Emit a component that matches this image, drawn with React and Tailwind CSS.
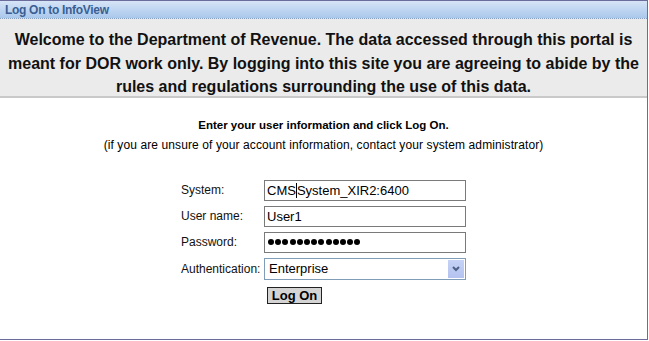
export default function App() {
  const labelCls = "text-[12px] text-[#111] leading-none";
  const inputCls =
    "w-[202px] h-[21px] border border-[#7a7a7a] bg-white px-[2px] text-[13px] text-black flex items-center leading-none";
  return (
    <div className="w-[649px] h-[341px] bg-white" style={{ fontFamily: '"Liberation Sans", Arial, sans-serif' }}>
      <div className="w-[648px] h-[340px] border-t border-r border-b border-[#6c6c9c] flex flex-col">
        <div className="h-[18px] bg-gradient-to-b from-[#d6e4f6] to-[#a9c7ec] border-b border-dotted border-[#8aa0c0] flex items-center pl-[5px]">
          <span className="text-[12px] font-bold text-[#3a5f93] tracking-[-0.3px] leading-none">
            Log On to InfoView
          </span>
        </div>
        <div className="h-[79px] bg-[#ebebeb] border-b-2 border-[#c9c9c9] flex justify-center pt-[9px]">
          <p className="text-[16px] font-bold text-[#111] leading-[23.5px] text-center">
            Welcome to the Department of Revenue. The data accessed through this portal is
            <br />
            meant for DOR work only. By logging into this site you are agreeing to abide by the
            <br />
            rules and regulations surrounding the use of this data.
          </p>
        </div>
        <div className="flex flex-col items-center pt-[22px]">
          <p className="text-[11.5px] font-bold text-black leading-none">Enter your user information and click Log On.</p>
          <p className="text-[12px] tracking-[0.1px] text-black leading-none mt-[7px]">
            (if you are unsure of your account information, contact your system administrator)
          </p>
        </div>
        <div className="flex mt-[29px] pl-[181px]">
          <div className="flex flex-col">
            <div className="flex items-center h-[21px]">
              <span className={labelCls + " w-[83px]"}>System:</span>
              <div className={inputCls}>
                <span>CMS</span>
                <span className="w-[1px] h-[15px] bg-black"></span>
                <span>System_XIR2:6400</span>
              </div>
            </div>
            <div className="flex items-center h-[21px] mt-[5px]">
              <span className={labelCls + " w-[83px]"}>User name:</span>
              <div className={inputCls}>User1</div>
            </div>
            <div className="flex items-center h-[21px] mt-[5px]">
              <span className={labelCls + " w-[83px]"}>Password:</span>
              <div className={inputCls + " gap-[1.2px] pl-[3px]"}>
                {Array.from({ length: 13 }).map((_, i) => (
                  <span key={i} className="w-[6px] h-[6px] rounded-full bg-black"></span>
                ))}
              </div>
            </div>
            <div className="flex items-center h-[22px] mt-[5px]">
              <span className={labelCls + " w-[83px]"}>Authentication:</span>
              <div className="w-[202px] h-[22px] border border-[#7f9db9] bg-white flex items-center justify-between pl-[4px] pr-[1px]">
                <span className="text-[13px] text-black leading-none">Enterprise</span>
                <span className="w-[16px] h-[18px] bg-gradient-to-b from-[#c6d2f6] to-[#b3c2ef] flex items-center justify-center">
                  <svg width="8" height="6" viewBox="0 0 8 6">
                    <path d="M1 1 L4 4 L7 1" stroke="#4d6185" strokeWidth="2" fill="none" />
                  </svg>
                </span>
              </div>
            </div>
            <div className="flex mt-[7px] pl-[86px]">
              <div className="w-[55px] h-[17px] bg-[#d4d4d4] border border-[#222] flex items-center justify-center text-[13px] font-bold text-black leading-none">
                Log On
              </div>
            </div>
          </div>
        </div>
      </div>
    </div>
  );
}
